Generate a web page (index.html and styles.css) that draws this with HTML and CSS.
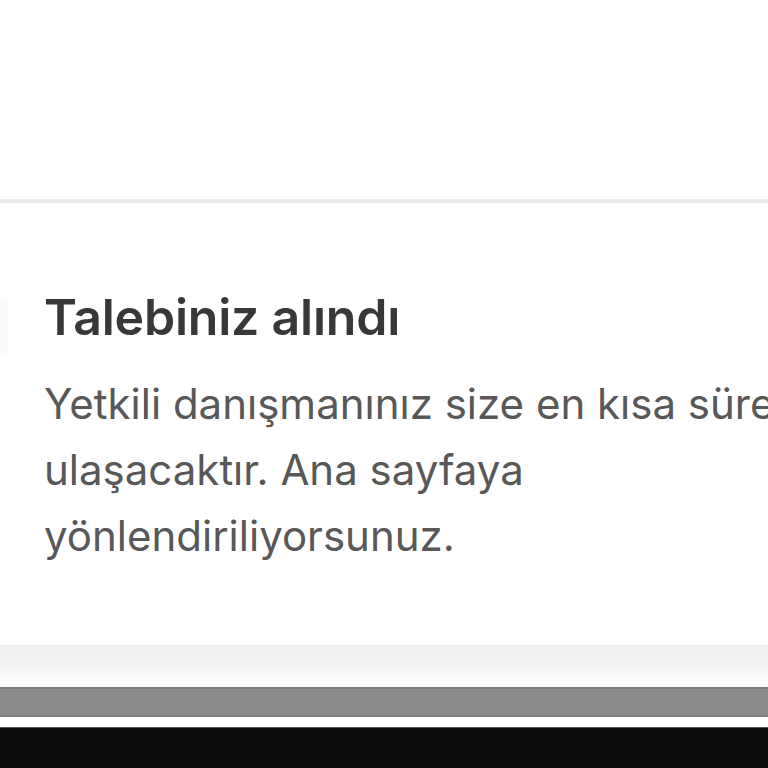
FILE: index.html
```html
<!DOCTYPE html>
<html lang="tr">
<head>
<meta charset="utf-8">
<link rel="stylesheet" href="styles.css">
</head>
<body>
<div class="page">
  <div class="top"></div>
  <div class="toast">
    <div class="toast-row">
      <div class="icon"></div>
      <div class="content">
        <h2 class="title">Talebiniz alındı</h2>
        <p class="text">Yetkili danışmanınız size en kısa sürede ulaşacaktır. Ana sayfaya yönlendiriliyorsunuz.</p>
      </div>
    </div>
  </div>
  <div class="under"></div>
  <div class="gap1"></div>
  <div class="bar"></div>
  <div class="gap2"></div>
  <div class="dark"></div>
</div>
</body>
</html>
```

FILE: styles.css
```css
html, body {
  margin: 0;
  padding: 0;
  background: #ffffff;
  overflow: hidden;
}
.page {
  width: 768px;
  height: 768px;
  overflow: hidden;
  font-family: Inter, "Noto Sans", sans-serif;
}
.top {
  height: 196px;
  background: #ffffff;
  border-bottom: 3px solid #fafafa;
}
.toast {
  border-top: 4px solid #eaeaea;
  background: #ffffff;
  height: 446px;
  padding-top: 84px;
  box-sizing: border-box;
}
.toast-row {
  display: flex;
  gap: 36px;
  margin-left: -60px;
}
.icon {
  width: 68px;
  height: 56px;
  margin-top: 12px;
  background: #f7fbfd;
  flex: none;
}
.content {
  width: 850px;
  flex: none;
}
.title {
  margin: 0;
  font-size: 50px;
  line-height: 60px;
  font-weight: 600;
  color: #383838;
  letter-spacing: -0.2px;
}
.text {
  margin: 24px 0 0;
  font-size: 42px;
  line-height: 66px;
  color: #585858;
}
.under {
  height: 38px;
  background: linear-gradient(#efefef, #f4f4f4 50%, #fbfbfb);
}
.gap1 {
  height: 4px;
  background: #fdfdfd;
}
.bar {
  height: 30px;
  box-sizing: border-box;
  background: #8b8b8b;
  border-top: 2px solid #7a7a7a;
  border-bottom: 2px solid #7e7e7e;
}
.gap2 {
  height: 10px;
  background: #ffffff;
  border-bottom: 1px solid #555555;
}
.dark {
  height: 60px;
  background: #0b0b0b;
}
```
